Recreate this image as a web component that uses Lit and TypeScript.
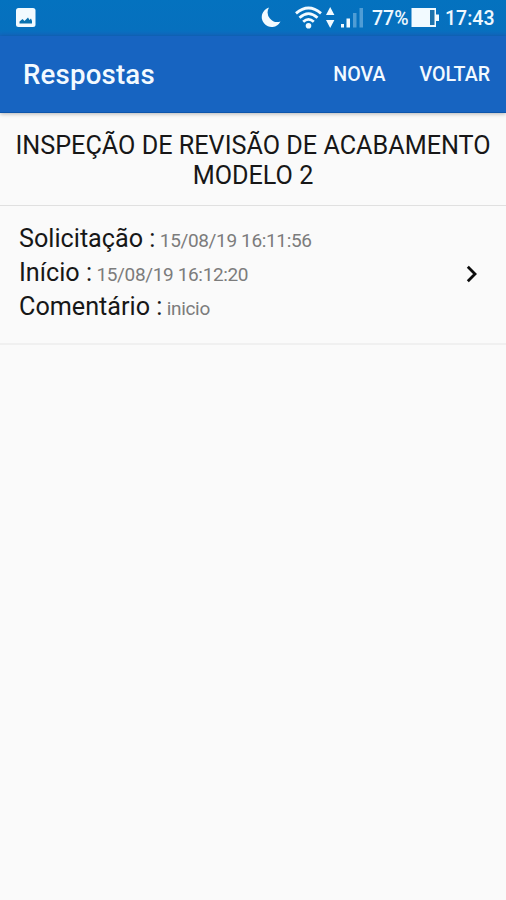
import { LitElement, html, css } from "lit";
import { customElement, property } from "lit/decorators.js";

@customElement("status-bar")
class StatusBar extends LitElement {
  static styles = css`
    :host {
      display: flex;
      align-items: flex-start;
      height: 36px;
      box-sizing: border-box;
      background: linear-gradient(#0472bf 0, #0670be 30px, #1267c0 36px);
      color: #eef8fe;
      font-size: 19.5px;
      line-height: 37px;
      white-space: nowrap;
    }
    svg { display: block; flex: none; }
    .photo { margin-left: 16px; }
    .right { display: flex; width: 246px; margin-left: auto; }
    .level { width: 39px; flex: none; }
    .time { width: 53px; margin-left: 6px; }
    .level, .time { font-weight: 500; }
  `;

  render() {
    return html`
      <svg class="photo" width="20" height="36" viewBox="0 0 20 36">
        <rect x="0" y="8" width="19.5" height="19" rx="2.5" fill="#f2faff" />
        <path d="M3.5 23.5V21.5L6.5 19L8.5 21L12 17.5L13.5 20L15 18.5L16 21V23.5Z" fill="#0872b0" />
      </svg>
      <div class="right">
        <svg width="112" height="36" viewBox="260 0 112 36">
          <path d="M269 7.5A9.9 9.9 0 1 0 280.5 21.5A9.7 9.7 0 0 1 269 7.5Z" fill="#f2faff" />
          <g fill="none" stroke="#f2faff" stroke-width="2.8">
            <path d="M296 13.4Q308.5 2.5 321 13.4" />
            <path d="M299.5 17.7Q308.5 9.5 317.5 17.7" />
            <path d="M303.2 21.8Q308.5 17 313.8 21.8" />
          </g>
          <circle cx="308.5" cy="25.8" r="2.8" fill="#f2faff" />
          <path d="M326 15L330.2 7L334.4 15ZM326 20L330.2 28L334.4 20Z" fill="#f2faff" />
          <rect x="341" y="24" width="3" height="3.5" fill="#f2faff" />
          <rect x="346.5" y="18.5" width="3.5" height="9" fill="#f2faff" />
          <rect x="353" y="13" width="3.5" height="14.5" fill="#4f9dd5" />
          <rect x="359.5" y="8" width="3.5" height="19.5" fill="#4f9dd5" />
        </svg>
        <span class="level">77%</span>
        <svg width="28" height="36" viewBox="411 0 28 36">
          <rect x="411.5" y="8" width="24.5" height="19" fill="#f2faff" />
          <rect x="436" y="14.5" width="3" height="6.5" fill="#f2faff" />
          <rect x="430" y="10" width="4.5" height="15" fill="#1d72ac" />
        </svg>
        <span class="time">17:43</span>
      </div>
    `;
  }
}

@customElement("app-toolbar")
class AppToolbar extends LitElement {
  static styles = css`
    :host {
      display: flex;
      align-items: center;
      height: 77px;
      box-sizing: border-box;
      padding: 0 16px 0 23px;
      position: relative;
      background: #1764c1;
      border-bottom: 1px solid #0d55ab;
      box-shadow: 0 1px 4px rgba(0, 0, 0, 0.28);
      color: #f3faff;
      font-weight: 500;
    }
    .title { flex: 1; font-size: 27.6px; letter-spacing: 0.2px; }
    .actions { display: flex; gap: 34px; font-size: 19.6px; }
    .action { white-space: nowrap; }
  `;

  render() {
    return html`
      <div class="title">Respostas</div>
      <div class="actions">
        <span class="action">NOVA</span>
        <span class="action">VOLTAR</span>
      </div>
    `;
  }
}

@customElement("answer-field")
class AnswerField extends LitElement {
  @property() label = "";
  @property() value = "";

  static styles = css`
    :host { display: block; height: 34px; line-height: 34px; white-space: nowrap; }
    .label { font-size: 25.2px; color: #171717; }
    .value { font-size: 19px; letter-spacing: -0.35px; color: #7c7c7c; }
  `;

  render() {
    return html`<span class="label">${this.label} :</span><span class="value"> ${this.value}</span>`;
  }
}

@customElement("app-root")
class AppRoot extends LitElement {
  private fields = [
    { label: "Solicitação", value: "15/08/19 16:11:56" },
    { label: "Início", value: "15/08/19 16:12:20" },
    { label: "Comentário", value: "inicio" },
  ];

  static styles = css`
    :host {
      display: flex;
      flex-direction: column;
      height: 900px;
      overflow: hidden;
      background: #fafafa;
      font-family: Roboto, sans-serif;
    }
    .heading {
      height: 93px;
      box-sizing: border-box;
      padding-top: 18px;
      border-bottom: 1px solid #e0e0e0;
      color: #171717;
      font-size: 25.2px;
      line-height: 30px;
      text-align: center;
      white-space: nowrap;
    }
    .row {
      display: flex;
      align-items: center;
      justify-content: space-between;
      height: 139px;
      box-sizing: border-box;
      padding: 0 28px 2px 19px;
      border-bottom: 2px solid #f0f0f0;
    }
    .fields { padding-bottom: 2px; }
    .chevron { display: block; }
  `;

  render() {
    return html`
      <status-bar></status-bar>
      <app-toolbar></app-toolbar>
      <div class="heading">INSPEÇÃO DE REVISÃO DE ACABAMENTO<br />MODELO 2</div>
      <div class="row">
        <div class="fields">
          ${this.fields.map(
            (f) => html`<answer-field .label=${f.label} .value=${f.value}></answer-field>`
          )}
        </div>
        <svg class="chevron" width="12" height="18" viewBox="0 0 12 18">
          <path d="M1.8 1.8L9 9L1.8 16.2" fill="none" stroke="#0c0c0c" stroke-width="2.8" />
        </svg>
      </div>
    `;
  }
}
